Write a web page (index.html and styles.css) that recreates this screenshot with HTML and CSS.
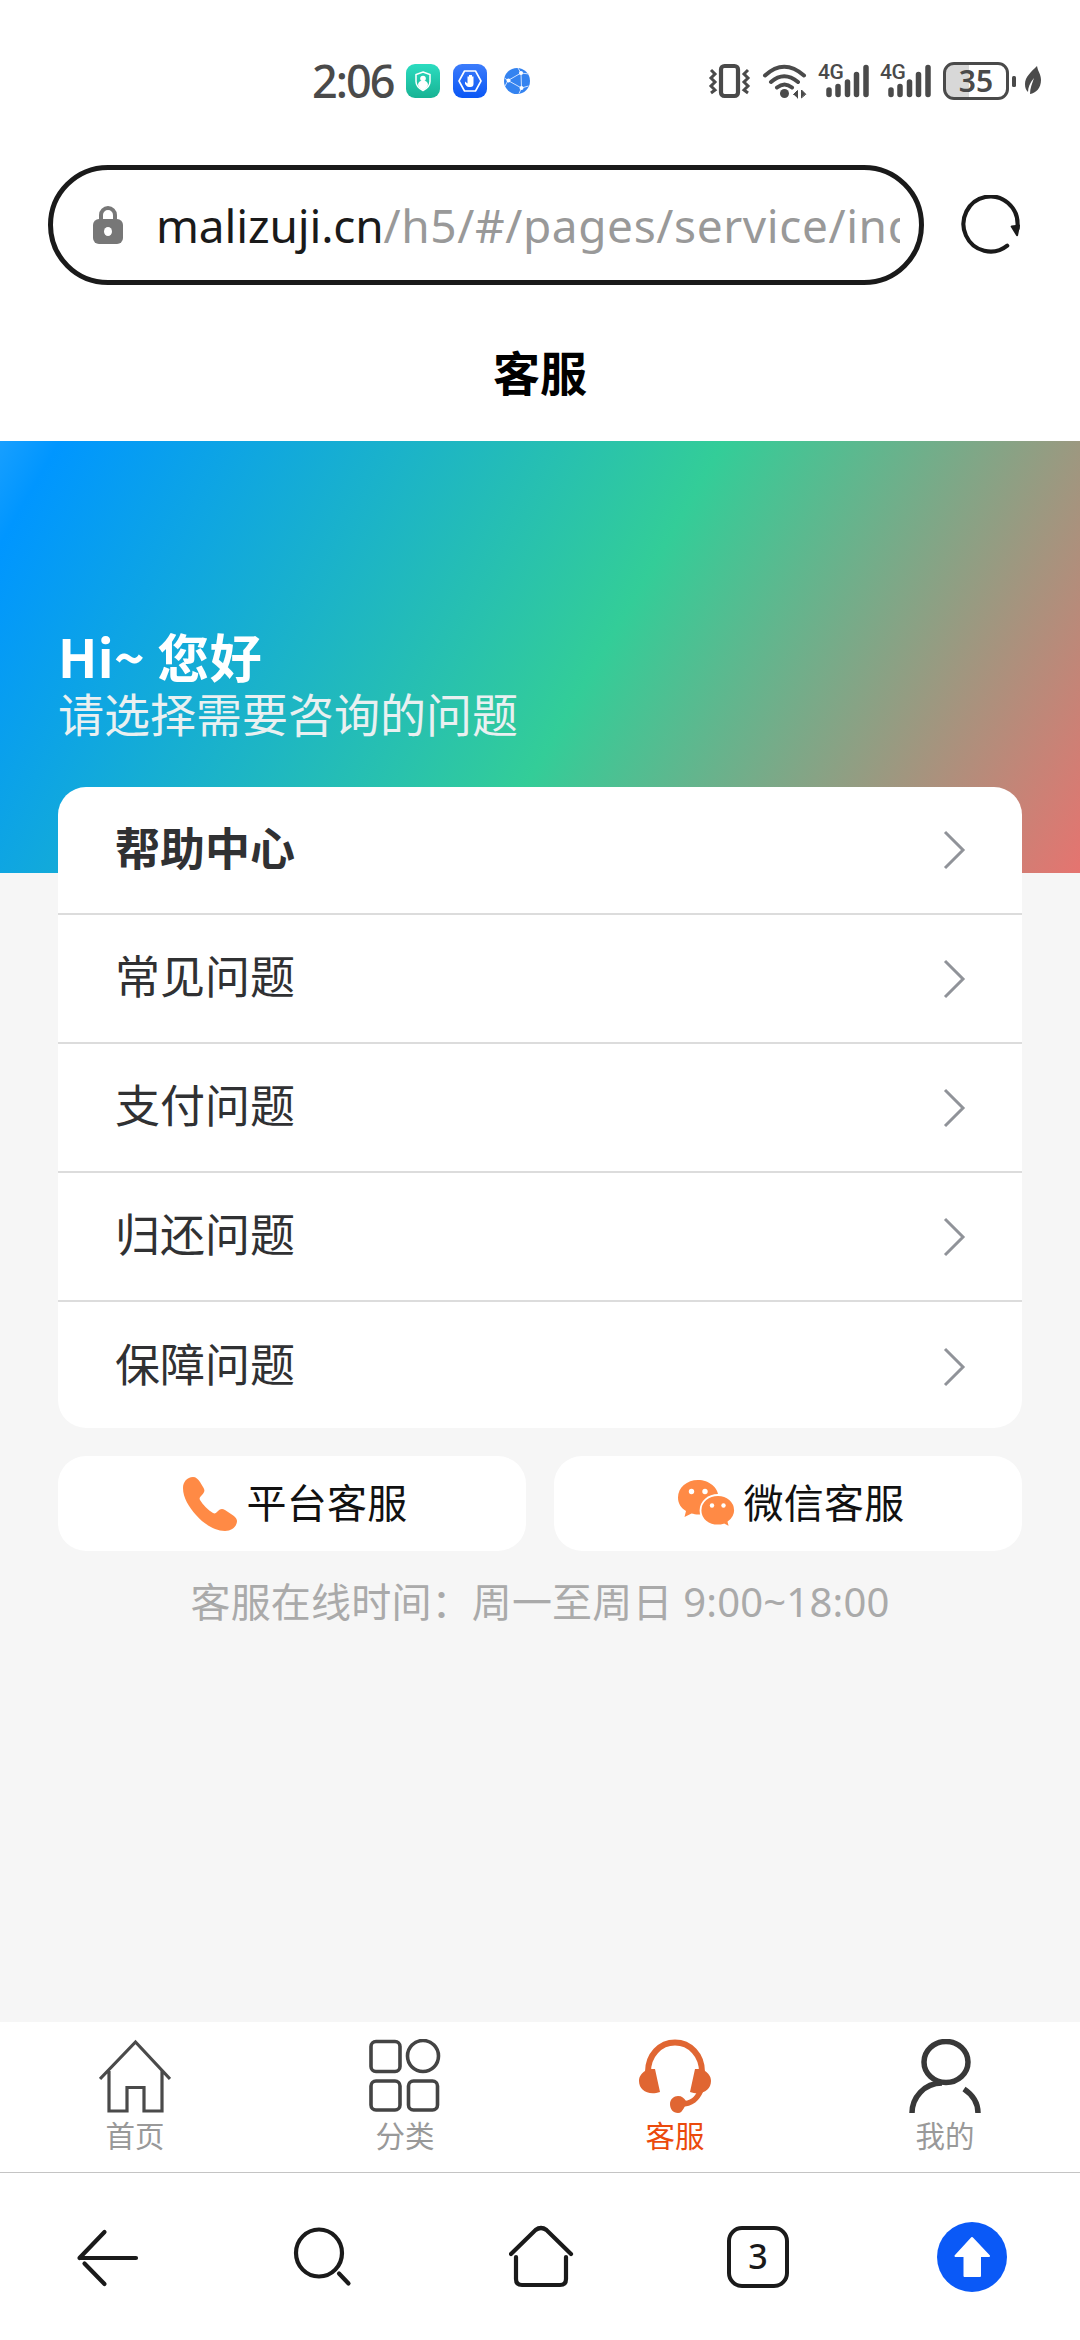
FILE: index.html
```html
<!DOCTYPE html>
<html lang="zh-CN">
<head>
<meta charset="utf-8">
<meta name="viewport" content="width=device-width">
<title>客服</title>
<link rel="stylesheet" href="styles.css">
</head>
<body>
<header class="status">
  <div class="status-left">
    <span class="clock">2:06</span>
    <svg class="app" viewBox="0 0 34 34"><defs><linearGradient id="ga" x2="0" y2="1"><stop stop-color="#2bdcc0"/><stop offset="1" stop-color="#18b394"/></linearGradient></defs><rect width="34" height="34" rx="9" fill="url(#ga)"/><path d="M17 8l7 2.500v7c0 4-3 7-7 9-4-2-7-5-7-9v-7z" fill="none" stroke="#fff" stroke-width="1.500"/><circle cx="17" cy="14.500" r="2.800" fill="#fff"/><path d="M12 21c0-3 2-4.500 5-4.500s5 1.500 5 4.500c-1 2.500-3 4-5 5-2-1-4-2.500-5-5z" fill="#fff"/></svg>
    <svg class="app" viewBox="0 0 34 34"><defs><linearGradient id="gb" x2="0" y2="1"><stop stop-color="#3c7cfb"/><stop offset="1" stop-color="#0a57f5"/></linearGradient></defs><rect width="34" height="34" rx="9" fill="url(#gb)"/><path d="M11.500 7h11l5.500 10-5.500 10h-11L6 17z" fill="none" stroke="#fff" stroke-width="1.600" stroke-linejoin="round"/><path d="M12 17.500l2.500 2V12.500h1.500v4V11h1.500v5.500V11h1.500v5.500V12.500h1.500V20c0 2-1 3-3 3h-1.500c-2 0-2.500-1-4-3z" fill="#fff"/></svg>
    <svg class="app" viewBox="0 0 34 34"><circle cx="17" cy="17" r="13" fill="#3483f0"/><path d="M8 16.500L21 9M8 16.500L21.500 24M21 9l.5 15M21 9l8 1M21.500 24l7-2M8 16.500L4.500 14M8 16.500L5 22M21 9l-3-5M21.500 24L19 29.500" stroke="#cfe2ff" stroke-width="1"/><circle cx="8.500" cy="16.500" r="2" fill="#fff"/><circle cx="21" cy="9" r="2" fill="#fff"/><circle cx="21.500" cy="24" r="2" fill="#fff"/></svg>
  </div>
  <div class="status-right">
    <svg width="44" height="36" viewBox="0 0 44 36" fill="none" stroke="#4a4a4a"><rect x="13" y="3" width="17" height="30" rx="3.500" stroke-width="4.200"/><path d="M3 7l4 4-4 4 4 4-4 4 4 4-4 3M40 7l-4 4 4 4-4 4 4 4-4 4 4 3" stroke-width="3"/></svg>
    <svg class="wifi" width="46" height="36" viewBox="0 0 46 36" fill="none" stroke="#4a4a4a" stroke-linecap="round"><path d="M3 12.500Q22 -5 42 12.500M9 19q13-11.500 27 0M15 24.500q7.500-6 15 0" stroke-width="4"/><circle cx="22.500" cy="30.500" r="4.500" fill="#4a4a4a" stroke="none"/><path d="M31.500 31.500l4-4v7.500M39.500 34.500v-7.500l4 4z" fill="#4a4a4a" stroke-width="1"/></svg>
    <div class="signal"><span class="net">4G</span><svg width="52" height="36" viewBox="0 0 52 36" stroke="#4a4a4a" stroke-width="5.500" stroke-linecap="round"><path d="M11 27v4.500M20 23.500v8M29.500 19v12.500M38.500 11.500v20M48 4.500v27"/></svg></div>
    <div class="signal"><span class="net">4G</span><svg width="52" height="36" viewBox="0 0 52 36" stroke="#4a4a4a" stroke-width="5.500" stroke-linecap="round"><path d="M11 27v4.500M20 23.500v8M29.500 19v12.500M38.500 11.500v20M48 4.500v27"/></svg></div>
    <div class="battery">35</div>
    <svg class="cap" width="5" height="36" viewBox="0 0 5 36"><rect y="13" width="4" height="11" rx="1.500" fill="#4a4a4a"/></svg>
    <svg width="20" height="32" viewBox="0 0 20 32"><path d="M14 1C8 7 2 12 2 19c0 4 1 6 3 8 0-5 2-9 6-14-2 6-4 10-4 16 6-1 11-6 11-14 0-6-3-8-4-14z" fill="#4a4a4a"/></svg>
  </div>
</header>
<div class="address">
  <div class="url-box">
    <svg width="30" height="40" viewBox="0 0 30 40"><path d="M8 16V10a7 7 0 0 1 14 0v6" fill="none" stroke="#777" stroke-width="4"/><rect y="14" width="30" height="25" rx="6" fill="#777"/><ellipse cx="15" cy="26.500" rx="4" ry="4.500" fill="#fff"/></svg>
    <div class="url"><span class="host">malizuji.cn</span>/h5/#/pages/service/ind</div>
  </div>
  <svg class="reload" width="60" height="62" viewBox="0 0 60 62"><path d="M46.500 51.500A27.500 28 0 1 1 57 30.500V34" fill="none" stroke="#1a1a1a" stroke-width="4.200" stroke-linecap="round"/><path d="M51 32l7.500-1-2 10z" fill="#1a1a1a" stroke="#1a1a1a" stroke-width="2" stroke-linejoin="round"/></svg>
</div>
<h1 class="title">客服</h1>
<main class="page">
  <section class="hero">
    <h2 class="hello">Hi~ 您好</h2>
    <p class="hint">请选择需要咨询的问题</p>
  </section>
  <ul class="list">
    <li class="row row-head"><span>帮助中心</span><svg class="chev" viewBox="0 0 24 40"><path d="M3 2l18 18L3 38"/></svg></li>
    <li class="row"><span>常见问题</span><svg class="chev" viewBox="0 0 24 40"><path d="M3 2l18 18L3 38"/></svg></li>
    <li class="row"><span>支付问题</span><svg class="chev" viewBox="0 0 24 40"><path d="M3 2l18 18L3 38"/></svg></li>
    <li class="row"><span>归还问题</span><svg class="chev" viewBox="0 0 24 40"><path d="M3 2l18 18L3 38"/></svg></li>
    <li class="row"><span>保障问题</span><svg class="chev" viewBox="0 0 24 40"><path d="M3 2l18 18L3 38"/></svg></li>
  </ul>
  <div class="contact">
    <div class="btn"><svg width="58" height="58" viewBox="0 0 58 58"><path d="M12 2C6 2 2 7 2 13c0 10 6 19 13 27s18 16 29 16c7 0 12-5 12-10 0-3-3-5-6-7l-6-4c-3-2-5-1-7 1-2 2-3 3-5 2-5-3-10-8-13-13-1-2 0-3 2-5 3-3 3-5 1-8l-3-5c-2-3-4-5-7-5z" fill="#ff8a45"/></svg><span>平台客服</span></div>
    <div class="btn"><svg width="60" height="58" viewBox="0 0 60 58"><path d="M22 5C11 5 2 12.500 2 22.500c0 6 3 10.500 8 13.500L8.500 42l7-3.500c2 .5 4.500 1 7 1 10 0 20-7 20-17S33 5 22 5z" fill="#ff8a45"/><path d="M42 20c-9.500 0-17.500 6.500-17.500 15.500S32.500 50.500 42 50.500c2 0 4-.4 6-1l6 3-1.500-5.500c4-3 6.500-7 6.500-11.500C59 26.500 51 20 42 20z" fill="#ff8a45" stroke="#fff" stroke-width="1.800"/><g fill="#fff"><circle cx="15.500" cy="16.500" r="2.700"/><circle cx="29" cy="16.500" r="2.700"/><circle cx="36" cy="30.500" r="2.200"/><circle cx="47.500" cy="30.500" r="2.200"/></g></svg><span>微信客服</span></div>
  </div>
  <p class="hours">客服在线时间：周一至周日 9:00~18:00</p>
</main>
<nav class="tabs">
  <div class="tab"><svg viewBox="0 0 72 74" fill="none" stroke="#4a4a4a" stroke-width="3.200"><path d="M1 40L36.500 3 71 40M10 32v40h18V48.500h17V72h18V32"/></svg>首页</div>
  <div class="tab"><svg viewBox="0 0 72 74" fill="none" stroke="#444" stroke-width="3.600"><rect x="2" y="2.500" width="29" height="30" rx="5"/><ellipse cx="54" cy="17" rx="15.500" ry="15.500"/><rect x="2" y="42" width="29" height="29" rx="5"/><rect x="39.500" y="42" width="29" height="29" rx="5"/></svg>分类</div>
  <div class="tab tab-on"><svg viewBox="0 0 72 74"><path d="M9 33C9 16 21 3.500 36 3.500S63 16 63 33" fill="none" stroke="#e06632" stroke-width="6"/><path d="M8 30h8l5 23C9 57 0 51 0 42c0-5 3-8 6-10zM64 30h-8l-5 23C63 57 72 51 72 42c0-5-3-8-6-10z" fill="#e06632"/><path d="M62 51C58 60 53 65 42 65" fill="none" stroke="#e06632" stroke-width="5.500"/><path d="M39 57c4 0 6 2 8 5 0 3-1 5-2 7-2 3-3 5-6 5-5 0-8-4-8-9s4-8 8-8z" fill="#e06632"/></svg>客服</div>
  <div class="tab"><svg viewBox="0 0 72 74" fill="none" stroke="#383838" stroke-width="5.500"><ellipse cx="37" cy="23" rx="22" ry="20.500"/><path d="M3 74C3 59 15 44 33 44M55 50c9 6 14 14 14 24"/></svg>我的</div>
</nav>
<nav class="tools">
  <svg viewBox="0 0 70 70"><path d="M6.500 36H63M31.500 10L6.500 36M11.500 41.500l20 20.500"/></svg>
  <svg viewBox="0 0 70 70"><ellipse cx="28" cy="31" rx="23" ry="23.500"/><path d="M48 51.500l9.500 10"/></svg>
  <svg viewBox="0 0 70 70"><path d="M2 32L26.500 8q5.500-4 11 0L62 32M7 35v22q0 6 6 6h38q6 0 6-6V35"/></svg>
  <div class="count">3</div>
  <svg viewBox="0 0 70 70"><circle cx="35" cy="35" r="35" fill="#0a59f7" stroke="none"/><path d="M35 16L52 34H43V54H27.500V34H18.500z" fill="#fff" stroke="#fff" stroke-width="2" stroke-linejoin="round"/></svg>
</nav>
</body>
</html>
```
FILE: styles.css
```css
* { box-sizing: border-box; }
body { margin: 0; width: 1080px; height: 2340px; display: flex; flex-direction: column; overflow: hidden; background: #fff; color: #1a1a1a; font-family: "Noto Sans", "Noto Sans CJK SC", sans-serif; }
h1, h2, p, ul { margin: 0; padding: 0; }
svg { flex: none; display: block; }
.status { height: 165px; flex: none; display: flex; justify-content: space-between; padding: 63px 37px 0 312px; color: #4a4a4a; }
.status-left, .status-right { display: flex; height: 36px; align-items: center; }
.clock { width: 94px; font: 500 45px/36px "Noto Sans", sans-serif; letter-spacing: -2px; }
.app { width: 34px; height: 34px; margin-right: 13px; }
.wifi { margin: 0 10px 0 10px; }
.signal { display: grid; margin-right: 10px; }
.signal > * { grid-area: 1 / 1; }
.net { font: 500 21px/19px Roboto, sans-serif; letter-spacing: -.5px; }
.battery { width: 66px; height: 38px; border: 3px solid #4a4a4a; border-radius: 11px; margin-left: 1px; background: linear-gradient(90deg, #d8d8d8 38%, #fff 38%); font: 600 30px/32px "Noto Sans", sans-serif; text-align: center; }
.cap { margin: 0 6px 0 3px; }
.address { height: 120px; flex: none; display: flex; align-items: center; padding-left: 48px; }
.url-box { width: 876px; height: 120px; border: 5px solid #1a1a1a; border-radius: 60px; display: flex; align-items: center; padding-left: 40px; }
.url { width: 744px; margin-left: 33px; overflow: hidden; white-space: nowrap; font-size: 46px; line-height: 64px; letter-spacing: .6px; color: #999; }
.host { color: #1a1a1a; letter-spacing: -.15px; }
.reload { margin-left: 37px; padding-top: 1px; }
.title { height: 156px; flex: none; font: bold 47px/172px "Noto Sans CJK SC", sans-serif; text-align: center; color: #000; }
.page { height: 1581px; flex: none; background: #f6f6f6; }
.hero { height: 432px; padding: 180px 58px 0; color: #fff; background: linear-gradient(120deg, #189fff 0, #0096ff 4.500%, #33cd98 54.500%, #f56c6c 104%); }
.hello { font-size: 52px; line-height: 70px; font-weight: 700; font-family: "Noto Sans CJK SC", sans-serif; letter-spacing: .4px; }
.hint { font-size: 46px; line-height: 46px; color: #e9f0f1; }
.list { margin: -86px 58px 0; border-radius: 28px; background: #fff; list-style: none; overflow: hidden; height: 641px; }
.row { height: 129px; padding: 0 56px 0 57px; display: flex; align-items: center; justify-content: space-between; font-size: 45px; line-height: 60px; color: #303133; border-bottom: 2px solid #dcdcdc; }
.row span { padding-bottom: 3px; }
.row:last-child { border: 0; }
.row-head { height: 128px; font-weight: bold; }
.chev { width: 24px; height: 40px; fill: none; stroke: #909399; stroke-width: 3; }
.contact { display: flex; gap: 28px; margin: 28px 58px 0; }
.btn { flex: 1; height: 95px; border-radius: 28px; background: #fff; display: flex; align-items: center; justify-content: center; gap: 7px; padding-left: 5px; font-size: 40px; line-height: 50px; color: #111; }
.btn span { padding-bottom: 2px; letter-spacing: .3px; }
.hours { margin-top: 21px; text-align: center; font-size: 40px; line-height: 60px; letter-spacing: .18px; color: #aaa; }
.tabs { height: 151px; flex: none; display: flex; border-bottom: 1px solid #c4c4c4; }
.tab { flex: 1; display: flex; flex-direction: column; align-items: center; padding-top: 17px; font-size: 29.5px; line-height: 36px; color: #999; gap: 5px; }
.tab svg { width: 72px; height: 74px; }
.tab-on { color: #eb4a0c; }
.tools { height: 167px; flex: none; display: flex; align-items: center; justify-content: space-between; padding: 0 73px 0 73px; }
.tools svg { width: 70px; height: 70px; fill: none; stroke: #1a1a1a; stroke-width: 4.200; stroke-linecap: round; }
.count { width: 62px; height: 62px; border: 4px solid #1a1a1a; border-radius: 15px; font: 500 34px/52px "Noto Sans", sans-serif; text-align: center; }
```
